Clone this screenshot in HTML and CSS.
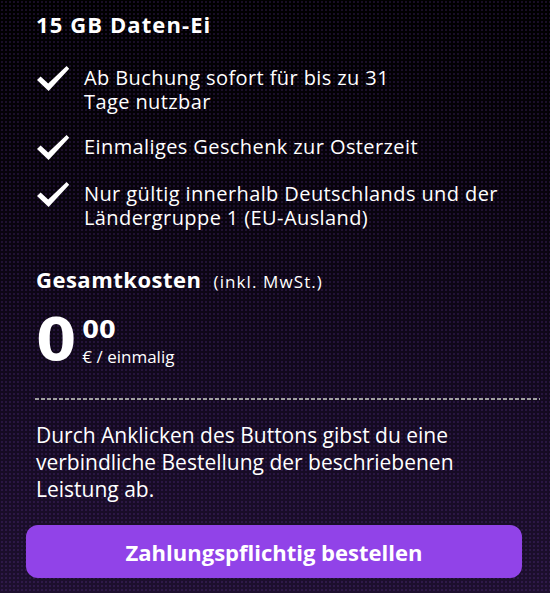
FILE: index.html
```html
<!DOCTYPE html>
<html lang="de">
<head>
  <meta charset="UTF-8">
  <title>15 GB Daten-Ei</title>
  <link rel="stylesheet" href="styles.css">
</head>
<body>

<div class="page">
  <h2 class="title">15 GB Daten-Ei</h2>

  <!-- Leistungen -->
  <ul class="features">
    <li>
      <svg class="check" viewBox="0 0 34 27"><path d="M1 15 L4.6 11.4 L12.2 18.6 L30.6 1 L33.2 3.8 L12.6 26 Z"/></svg>
      <span>Ab Buchung sofort für bis zu 31<br>Tage nutzbar</span>
    </li>
    <li>
      <svg class="check" viewBox="0 0 34 27"><path d="M1 15 L4.6 11.4 L12.2 18.6 L30.6 1 L33.2 3.8 L12.6 26 Z"/></svg>
      <span>Einmaliges Geschenk zur Osterzeit</span>
    </li>
    <li>
      <svg class="check" viewBox="0 0 34 27"><path d="M1 15 L4.6 11.4 L12.2 18.6 L30.6 1 L33.2 3.8 L12.6 26 Z"/></svg>
      <span>Nur gültig innerhalb Deutschlands und der<br>Ländergruppe 1 (EU-Ausland)</span>
    </li>
  </ul>

  <!-- Preis -->
  <div class="costs">
    <span class="costs-label">Gesamtkosten</span>
    <span class="costs-note">(inkl. MwSt.)</span>
  </div>
  <div class="price">
    <span class="price-main">0</span>
    <div class="price-side">
      <span class="price-cents">00</span>
      <span class="price-unit">€ / einmalig</span>
    </div>
  </div>

  <div class="divider"></div>

  <p class="legal">Durch Anklicken des Buttons gibst du eine<br>verbindliche Bestellung der beschriebenen<br>Leistung ab.</p>

  <button class="order">Zahlungspflichtig bestellen</button>
</div>

</body>
</html>
```

FILE: styles.css
```css
html, body {
  margin: 0;
  height: 100%;
}
body {
  font-family: "Open Sans", "DejaVu Sans", sans-serif;
  color: #fff;
  background-color: #000;
  background-image:
    radial-gradient(rgba(110, 60, 170, 0.22) 0.8px, transparent 1.4px),
    linear-gradient(to bottom, #000 0%, #07030b 30%, #140a21 70%, #1d0f2e 100%);
  background-size: 4px 4px, 100% 100%;
}
.page {
  padding: 9px 36px 0 36px;
}
.title {
  font-size: 22px;
  font-weight: 700;
  letter-spacing: 1.1px;
  margin: 0 0 27px;
  line-height: 30px;
}
.features {
  list-style: none;
  margin: 0;
  padding: 0;
}
.features li {
  display: flex;
  align-items: flex-start;
  gap: 14px;
  font-size: 20px;
  letter-spacing: 0.4px;
  line-height: 24px;
  margin-bottom: 21px;
}
.check {
  width: 34px;
  height: 27px;
  fill: #fff;
  flex: none;
  margin-top: -1px;
}
.costs {
  margin-top: 34px;
  display: flex;
  align-items: baseline;
  gap: 12px;
}
.costs-label {
  font-size: 22px;
  font-weight: 700;
  letter-spacing: 0.5px;
}
.costs-note {
  font-size: 17px;
  letter-spacing: 1.1px;
}
.price {
  display: flex;
  align-items: flex-start;
  gap: 6px;
  margin-top: 21px;
  font-family: "DejaVu Sans", sans-serif;
}
.price-main {
  font-size: 58px;
  font-weight: 700;
  line-height: 50px;
}
.price-side {
  display: flex;
  flex-direction: column;
}
.price-cents {
  font-size: 24px;
  font-weight: 700;
  line-height: 24px;
  margin-top: 3px;
}
.price-unit {
  font-family: "Open Sans", sans-serif;
  font-size: 17px;
  line-height: 24px;
  margin-top: 3px;
}
.divider {
  margin: 29px -26px 0 -1px;
  height: 2px;
  background-image: linear-gradient(to right, #a0a0a0 4px, transparent 4px);
  background-size: 6px 2px;
}
.legal {
  font-size: 21px;
  line-height: 27px;
  margin: 22px 0 0;
}
.order {
  display: block;
  width: calc(100% + 18px);
  margin: 22px 0 0 -10px;
  height: 53px;
  border: none;
  border-radius: 12px;
  background: #9143e8;
  color: #fff;
  font-family: inherit;
  font-size: 22px;
  font-weight: 700;
  cursor: pointer;
}
```
